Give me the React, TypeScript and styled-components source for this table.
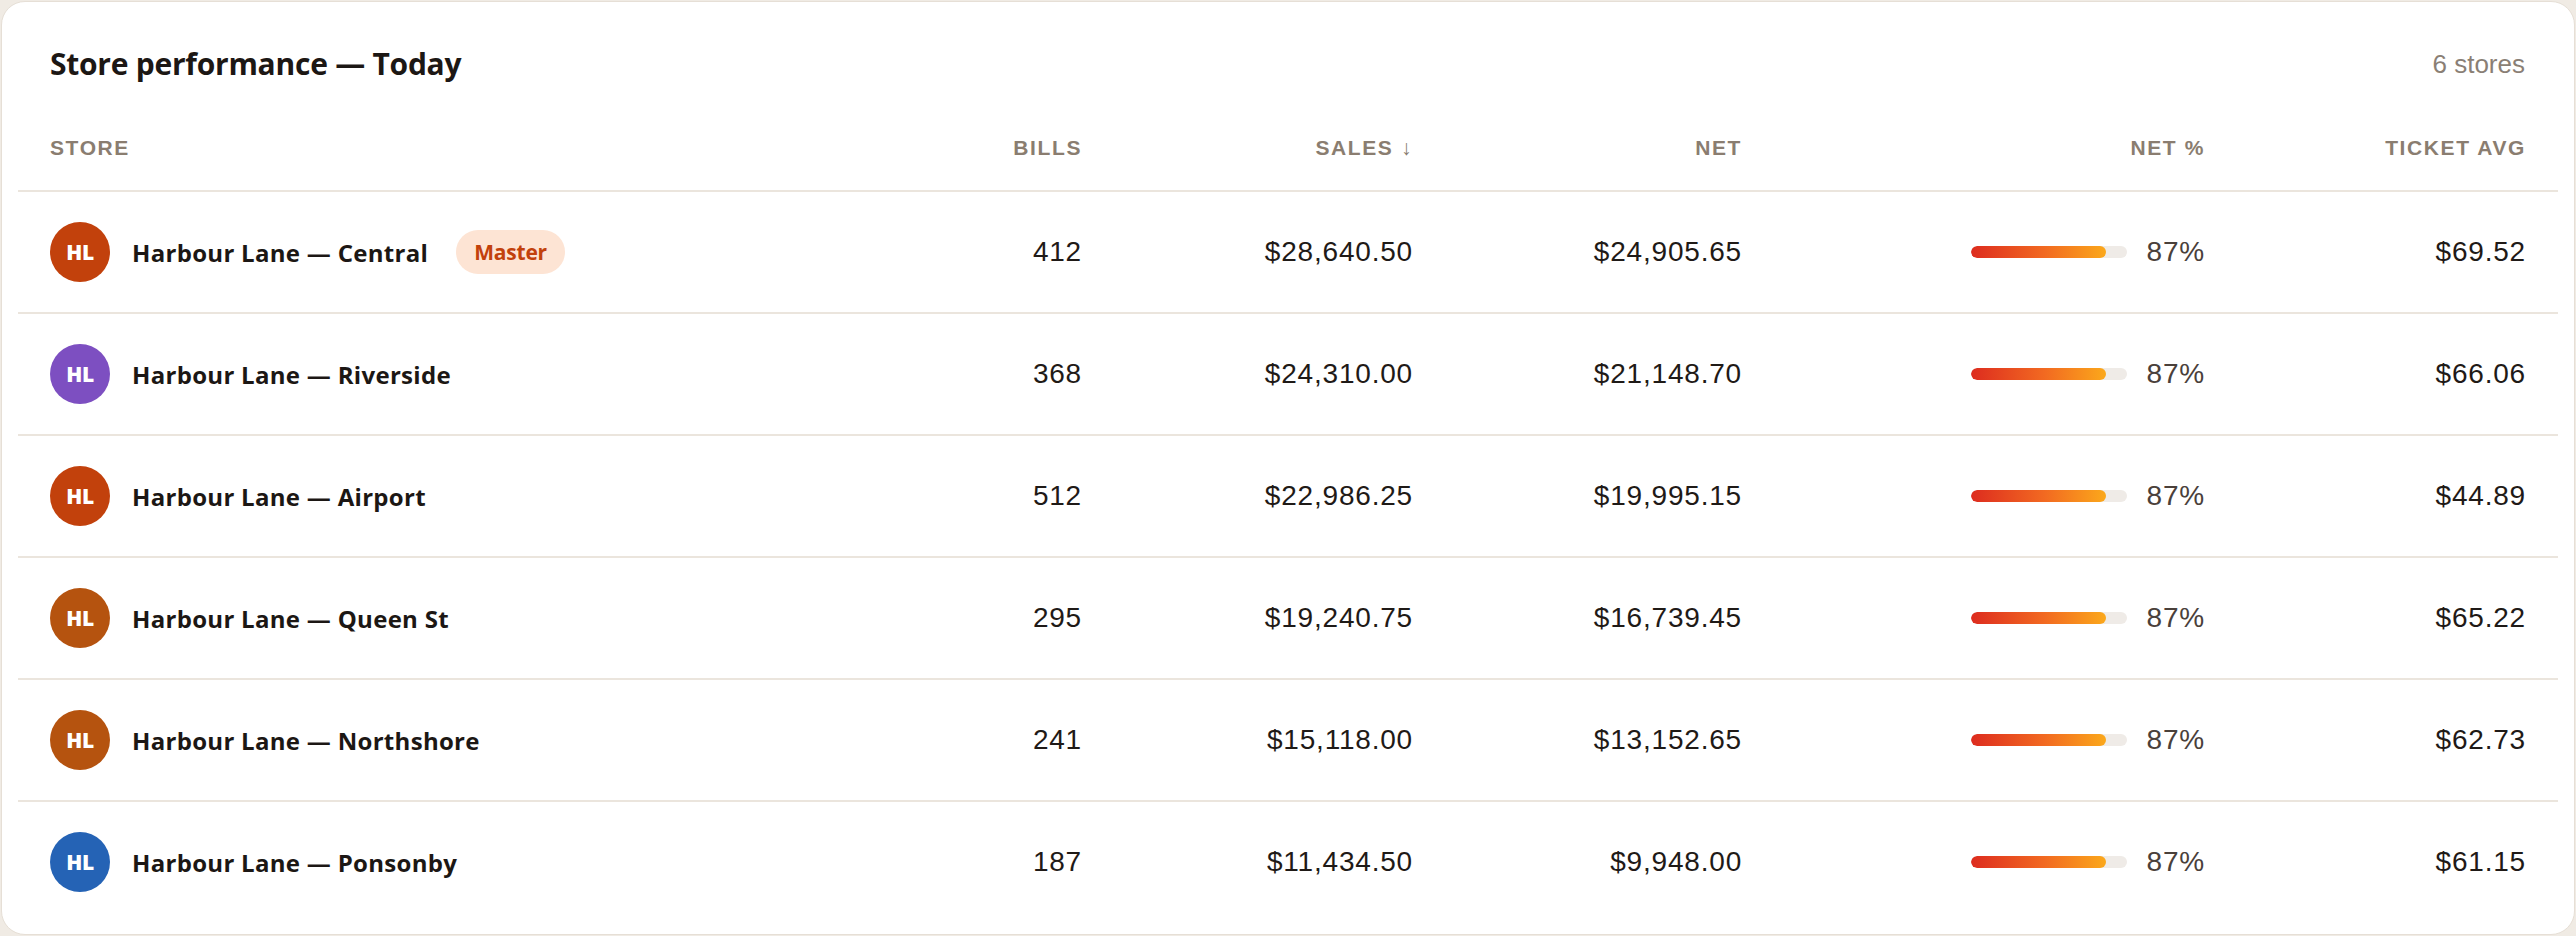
import React from "react";
import styled, { createGlobalStyle } from "styled-components";

const GlobalStyle = createGlobalStyle`
  html, body { margin: 0; padding: 0; background: #f0ebe4; }
  body { font-family: "Liberation Sans", Arial, sans-serif; }
  #root { padding: 1px; box-sizing: border-box; }
  * { box-sizing: border-box; }
`;

const COLS = "1fr 195px 331px 329px 463px 321px";

const Card = styled.section`
  background: #ffffff;
  border: 1px solid #e6dfd6;
  border-radius: 24px;
  padding: 0 16px 11px;
  min-height: 934px;
`;

const CardHeader = styled.header`
  display: flex;
  align-items: center;
  justify-content: space-between;
  padding: 42px 33px 0 32px;
  height: 82px;
`;

const Title = styled.h2`
  margin: 0;
  font-family: "Open Sans", "Noto Sans", sans-serif;
  font-weight: 700;
  font-size: 30px;
  line-height: 40px;
  color: #1c1714;
  letter-spacing: -0.25px;
`;

const Meta = styled.span`
  font-family: "Liberation Sans", Arial, sans-serif;
  font-size: 26px;
  line-height: 40px;
  color: #8a7f75;
`;

const HeadRow = styled.div`
  display: grid;
  grid-template-columns: ${COLS};
  border-bottom: 2px solid #ebe5dd;
`;

const HeadCell = styled.div<{ $align?: "left" | "right" }>`
  padding: 52px 32px 30px;
  line-height: 24px;
  font-family: "Liberation Sans", Arial, sans-serif;
  font-weight: 700;
  font-size: 21px;
  letter-spacing: 1.6px;
  color: #8a7d70;
  text-transform: uppercase;
  text-align: ${(p) => p.$align ?? "right"};
  white-space: nowrap;
`;

const Row = styled.div<{ $last?: boolean }>`
  display: grid;
  grid-template-columns: ${COLS};
  height: ${(p) => (p.$last ? "120px" : "122px")};
  border-bottom: ${(p) => (p.$last ? "none" : "2px solid #ebe5dd")};
  align-items: center;
`;

const Cell = styled.div`
  padding: 0 32px;
  text-align: right;
  font-family: "Liberation Sans", Arial, sans-serif;
  font-size: 28px;
  letter-spacing: 0.8px;
  color: #1f1a17;
  white-space: nowrap;
`;

const StoreCell = styled.div`
  display: flex;
  align-items: center;
  gap: 22px;
  padding: 0 32px;
`;

const Avatar = styled.div<{ $color: string }>`
  width: 60px;
  height: 60px;
  border-radius: 50%;
  background: ${(p) => p.$color};
  color: #ffffff;
  display: flex;
  align-items: center;
  justify-content: center;
  font-family: "Open Sans", "Noto Sans", sans-serif;
  font-weight: 800;
  font-size: 21px;
  letter-spacing: -0.5px;
  flex-shrink: 0;
`;

const StoreName = styled.span`
  font-family: "Open Sans", "Noto Sans", sans-serif;
  font-weight: 700;
  font-size: 24px;
  letter-spacing: 0.3px;
  color: #1c1714;
`;

const Badge = styled.span`
  margin-left: 6px;
  height: 44px;
  padding: 0 18px;
  border-radius: 22px;
  background: #fde4d4;
  color: #c2410c;
  display: inline-flex;
  align-items: center;
  font-family: "Open Sans", "Noto Sans", sans-serif;
  font-weight: 700;
  font-size: 21px;
  letter-spacing: -0.2px;
`;

const NetCell = styled.div`
  display: flex;
  align-items: center;
  justify-content: flex-end;
  gap: 20px;
  padding: 0 32px;
`;

const Track = styled.div`
  width: 156px;
  height: 12px;
  border-radius: 6px;
  background: #efebe7;
  overflow: hidden;
`;

const Fill = styled.div`
  height: 100%;
  border-radius: 6px;
  background: linear-gradient(90deg, #dd2c1f 0%, #f26a21 55%, #fba81b 100%);
`;

const Pct = styled.span`
  font-family: "Liberation Sans", Arial, sans-serif;
  font-size: 28px;
  letter-spacing: 0.8px;
  color: #4a403a;
`;

type Store = {
  name: string;
  color: string;
  master?: boolean;
  bills: number;
  sales: string;
  net: string;
  pct: number;
  ticket: string;
};

const stores: Store[] = [
  { name: "Harbour Lane — Central", color: "#c2410c", master: true, bills: 412, sales: "$28,640.50", net: "$24,905.65", pct: 87, ticket: "$69.52" },
  { name: "Harbour Lane — Riverside", color: "#7d4fc1", bills: 368, sales: "$24,310.00", net: "$21,148.70", pct: 87, ticket: "$66.06" },
  { name: "Harbour Lane — Airport", color: "#c2410c", bills: 512, sales: "$22,986.25", net: "$19,995.15", pct: 87, ticket: "$44.89" },
  { name: "Harbour Lane — Queen St", color: "#b5530f", bills: 295, sales: "$19,240.75", net: "$16,739.45", pct: 87, ticket: "$65.22" },
  { name: "Harbour Lane — Northshore", color: "#b5530f", bills: 241, sales: "$15,118.00", net: "$13,152.65", pct: 87, ticket: "$62.73" },
  { name: "Harbour Lane — Ponsonby", color: "#2563b5", bills: 187, sales: "$11,434.50", net: "$9,948.00", pct: 87, ticket: "$61.15" },
];

export default function App() {
  return (
    <>
      <GlobalStyle />
      <Card>
        <CardHeader>
          <Title>Store performance — Today</Title>
          <Meta>6 stores</Meta>
        </CardHeader>
        <HeadRow>
          <HeadCell $align="left">Store</HeadCell>
          <HeadCell>Bills</HeadCell>
          <HeadCell>Sales ↓</HeadCell>
          <HeadCell>Net</HeadCell>
          <HeadCell>Net %</HeadCell>
          <HeadCell>Ticket avg</HeadCell>
        </HeadRow>
        {stores.map((s, i) => (
          <Row key={s.name} $last={i === stores.length - 1}>
            <StoreCell>
              <Avatar $color={s.color}>HL</Avatar>
              <StoreName>{s.name}</StoreName>
              {s.master && <Badge>Master</Badge>}
            </StoreCell>
            <Cell>{s.bills}</Cell>
            <Cell>{s.sales}</Cell>
            <Cell>{s.net}</Cell>
            <NetCell>
              <Track>
                <Fill style={{ width: `${s.pct}%` }} />
              </Track>
              <Pct>{s.pct}%</Pct>
            </NetCell>
            <Cell>{s.ticket}</Cell>
          </Row>
        ))}
      </Card>
    </>
  );
}
